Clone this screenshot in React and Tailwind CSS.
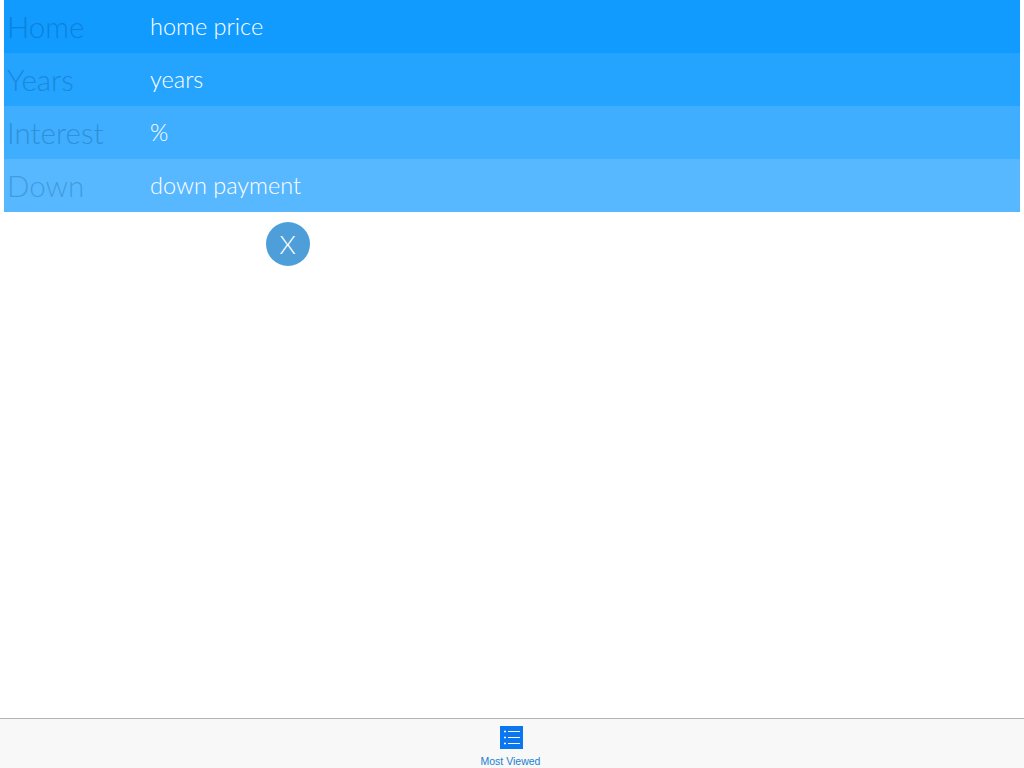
const rows = [
  { label: 'Home', placeholder: 'home price', bg: 'bg-[#129bff]', labelColor: 'text-[#0b82dc]' },
  { label: 'Years', placeholder: 'years', bg: 'bg-[#24a3ff]', labelColor: 'text-[#1a88dc]' },
  { label: 'Interest', placeholder: '%', bg: 'bg-[#40aeff]', labelColor: 'text-[#2f90d6]' },
  { label: 'Down', placeholder: 'down payment', bg: 'bg-[#58b8ff]', labelColor: 'text-[#409cdf]' },
];

export default function App() {
  return (
    <div className="flex h-[768px] w-[1024px] flex-col overflow-hidden bg-white font-['Lato',sans-serif]">
      <div className="flex-1">
        <div className="mx-1 flex flex-col">
          {rows.map((row) => (
            <div key={row.label} className={`flex h-[53px] items-center pt-px ${row.bg}`}>
              <span className={`w-[146px] pl-[3px] text-[29.5px] font-light ${row.labelColor}`}>{row.label}</span>
              <span className="text-[23.5px] font-light text-white">{row.placeholder}</span>
            </div>
          ))}
        </div>
        <div className="mt-[10px] pl-[265.5px]">
          <button className="flex h-[44px] w-[44px] items-center justify-center rounded-full bg-[#4e9fd9] text-[26px] font-light text-white">
            X
          </button>
        </div>
      </div>
      <div className="flex h-[50px] flex-col items-center border-t border-[#b2b2b2] bg-[#f8f8f8] pr-px">
        <svg className="mt-[7px]" width="23" height="23" viewBox="0 0 23 23">
          <rect width="23" height="23" fill="#0a76f0" />
          <path d="M8 5.5h12M8 11.5h12M8 17.5h12" stroke="#fff" strokeWidth="1" />
          <path d="M4 5.5h2M4 11.5h2M4 17.5h2" stroke="#fff" strokeWidth="1.5" />
        </svg>
        <span className="mt-[5px] mr-[2px] font-['Liberation_Sans',sans-serif] text-[10.5px] leading-[14px] text-[#2180d0]">Most Viewed</span>
      </div>
    </div>
  );
}
